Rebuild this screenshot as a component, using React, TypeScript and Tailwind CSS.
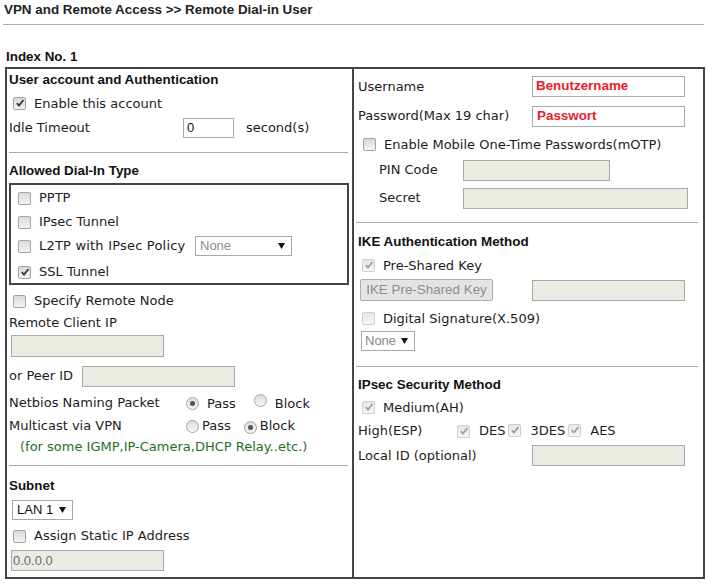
import React from "react";

const V = "font-['DejaVu_Sans',Verdana,sans-serif] text-[13px] text-[#1f1a22]";
const A = "font-['Liberation_Sans',Arial,sans-serif]";
const H = "font-['Liberation_Sans',Arial,sans-serif] text-[13.4px] font-bold text-[#111]";

function Cb({ checked, disabled }: { checked?: boolean; disabled?: boolean }) {
  return (
    <span
      className={
        disabled
          ? "inline-flex w-[13px] h-[13px] shrink-0 items-center justify-center rounded-[2px] border border-[#cfcfcf] bg-gradient-to-b from-[#e6e6e6] to-[#f7f7f7]"
          : "inline-flex w-[13px] h-[13px] shrink-0 items-center justify-center rounded-[2px] border border-[#a3a3a3] bg-gradient-to-b from-[#d9d9d9] to-[#f4f4f4]"
      }
    >
      {checked && (
        <svg width="10" height="10" viewBox="0 0 10 10">
          <path
            d="M1.8 5.2 L4 7.6 L8.4 2"
            fill="none"
            stroke={disabled ? "#a0a0a0" : "#3a3a3a"}
            strokeWidth="1.8"
          />
        </svg>
      )}
    </span>
  );
}

function Radio({ checked }: { checked?: boolean }) {
  return (
    <span className="inline-flex w-[13px] h-[13px] shrink-0 items-center justify-center rounded-full border border-[#a3a3a3] bg-gradient-to-b from-[#dcdcdc] to-[#f6f6f6]">
      {checked && <span className="w-[5px] h-[5px] rounded-full bg-[#555]" />}
    </span>
  );
}

function Tri() {
  return (
    <svg width="7" height="6" viewBox="0 0 7 6" className="shrink-0">
      <path d="M0 0 H7 L3.5 6 Z" fill="#111" />
    </svg>
  );
}

function Hr({ cls }: { cls: string }) {
  return <div className={"h-px shrink-0 bg-[#a8a8a8] " + cls} />;
}

export default function App() {
  return (
    <div className={"w-[708px] h-[584px] bg-white overflow-hidden " + V}>
      {/* Title */}
      <div className={H + " h-[24px] pl-[4px] pt-[2px] leading-[16px] text-[#222]"}>
        VPN and Remote Access &gt;&gt; Remote Dial-in User
      </div>
      <Hr cls="ml-[3px] w-[701px]" />
      <div className={H + " mt-[24px] pl-[6px] leading-[16px]"}>Index No. 1</div>

      {/* Main box */}
      <div className="mt-[2px] ml-[5px] w-[700px] h-[512px] border-2 border-[#444] flex">
        {/* Left column */}
        <div className="w-[345px] pl-[2px] flex flex-col">
          <div className={H + " mt-[1px] h-[20px] flex items-center"}>User account and Authentication</div>
          <div className="h-[26px] flex items-center pl-[4px] gap-[8px]">
            <Cb checked />
            <span className="mt-[1px]">Enable this account</span>
          </div>
          <div className="h-[24px] flex items-center">
            <span className="w-[174px]">Idle Timeout</span>
            <div className={A + " w-[51px] h-[20px] border border-[#a9a9a9] bg-white flex items-center pl-[3px] text-[13px] text-[#111]"}>0</div>
            <span className="ml-[12px]">second(s)</span>
          </div>
          <Hr cls="mt-[12px] w-[339px]" />
          <div className={H + " mt-[8px] h-[20px] flex items-center"}>Allowed Dial-In Type</div>
          <div className="mt-[2px] w-[340px] h-[102px] shrink-0 border-2 border-[#444] flex flex-col pl-[7px] pt-[1px]">
            <div className="h-[24px] shrink-0 flex items-center gap-[8px]">
              <Cb />
              <span>PPTP</span>
            </div>
            <div className="h-[24px] shrink-0 flex items-center gap-[8px]">
              <Cb />
              <span>IPsec Tunnel</span>
            </div>
            <div className="h-[24px] shrink-0 flex items-center gap-[8px]">
              <Cb />
              <span className="w-[148px] shrink-0 whitespace-nowrap tracking-[0.2px]">L2TP with IPsec Policy</span>
              <div className={A + " w-[97px] h-[20px] border border-[#a9a9a9] bg-white flex items-center justify-between pl-[4px] pr-[6px] text-[13px] text-[#8a8a8a]"}>
                None
                <Tri />
              </div>
            </div>
            <div className="mt-[3px] h-[22px] shrink-0 flex items-center gap-[8px]">
              <Cb checked />
              <span>SSL Tunnel</span>
            </div>
          </div>
          <div className="mt-[4px] h-[24px] flex items-center pl-[4px] gap-[8px]">
            <Cb />
            <span>Specify Remote Node</span>
          </div>
          <div className="h-[19px] flex items-center">Remote Client IP</div>
          <div className="mt-[3px] ml-[2px] w-[153px] h-[22px] border border-[#a9a9a9] bg-[#ebebe4]" />
          <div className="mt-[8px] h-[22px] flex items-center">
            <span className="w-[73px]">or Peer ID</span>
            <div className="w-[153px] h-[21px] border border-[#a9a9a9] bg-[#ebebe4]" />
          </div>
          <div className="mt-[5px] h-[22px] flex items-center">
            <span className="w-[177px]">Netbios Naming Packet</span>
            <Radio checked />
            <span className="ml-[8px] mt-[2px]">Pass</span>
            <span className="ml-[18px]"><Radio /></span>
            <span className="ml-[8px] mt-[2px]">Block</span>
          </div>
          <div className="mt-[1px] h-[22px] flex items-center">
            <span className="w-[177px]">Multicast via VPN</span>
            <Radio />
            <span className="ml-[3px]">Pass</span>
            <span className="ml-[13px]"><Radio checked /></span>
            <span className="ml-[3px]">Block</span>
          </div>
          <div className="h-[20px] flex items-center pl-[11px] text-[#1f6f1f]">
            (for some IGMP,IP-Camera,DHCP Relay..etc.)
          </div>
          <Hr cls="mt-[8px] w-[339px]" />
          <div className={H + " mt-[10px] h-[20px] flex items-center"}>Subnet</div>
          <div className={A + " mt-[4px] ml-[3px] w-[61px] h-[20px] border border-[#a9a9a9] bg-white flex items-center justify-between pl-[4px] pr-[6px] text-[13px] text-[#111]"}>
            LAN 1
            <Tri />
          </div>
          <div className="mt-[4px] h-[24px] flex items-center pl-[4px] gap-[8px]">
            <Cb />
            <span>Assign Static IP Address</span>
          </div>
          <div className={A + " mt-[2px] ml-[2px] w-[153px] h-[21px] border border-[#a9a9a9] bg-[#ebebe4] flex items-center pl-[1px] text-[13px] text-[#6d6d6d]"}>
            0.0.0.0
          </div>
        </div>

        {/* Divider */}
        <div className="w-[2px] bg-[#444]" />

        {/* Right column */}
        <div className="flex-1 pl-[4px] flex flex-col">
          <div className="mt-[5px] h-[24px] flex items-center">
            <span className="w-[174px] mt-[1px]">Username</span>
            <div className={A + " w-[153px] h-[21px] border border-[#a9a9a9] bg-white flex items-center pl-[3px] text-[13.4px] font-bold text-[#e8202a]"}>
              Benutzername
            </div>
          </div>
          <div className="mt-[6px] h-[24px] flex items-center">
            <span className="w-[174px]">Password(Max 19 char)</span>
            <div className={A + " w-[153px] h-[21px] border border-[#a9a9a9] bg-white flex items-center pl-[4px] text-[13.4px] font-bold text-[#e8202a]"}>
              Passwort
            </div>
          </div>
          <div className="mt-[4px] h-[24px] flex items-center pl-[5px] gap-[8px]">
            <Cb />
            <span className="mt-[1px]">Enable Mobile One-Time Passwords(mOTP)</span>
          </div>
          <div className="mt-[2px] h-[24px] flex items-center pl-[21px]">
            <span className="w-[84px]">PIN Code</span>
            <div className="w-[147px] h-[21px] border border-[#a9a9a9] bg-[#ebebe4]" />
          </div>
          <div className="mt-[4px] h-[24px] flex items-center pl-[21px]">
            <span className="w-[84px]">Secret</span>
            <div className="w-[225px] h-[21px] border border-[#a9a9a9] bg-[#ebebe4]" />
          </div>
          <Hr cls="mt-[12px] -ml-[2px] w-[342px]" />
          <div className={H + " mt-[9px] h-[20px] flex items-center"}>IKE Authentication Method</div>
          <div className="mt-[1px] h-[24px] flex items-center pl-[4px] gap-[8px]">
            <Cb checked disabled />
            <span className="mt-[1px]">Pre-Shared Key</span>
          </div>
          <div className="mt-[2px] h-[22px] flex items-center">
            <div className={A + " ml-[2px] w-[133px] h-[22px] border border-[#adadad] bg-[#e4e4e4] rounded-[2px] flex items-center justify-center text-[13.4px] text-[#8d8d8d]"}>
              IKE Pre-Shared Key
            </div>
            <div className="ml-[39px] w-[153px] h-[21px] border border-[#a9a9a9] bg-[#ebebe4]" />
          </div>
          <div className="mt-[5px] h-[24px] flex items-center pl-[4px] gap-[8px]">
            <Cb disabled />
            <span className="mt-[1px]">Digital Signature(X.509)</span>
          </div>
          <div className={A + " mt-[1px] ml-[3px] w-[54px] h-[20px] border border-[#a9a9a9] bg-white flex items-center justify-between pl-[3px] pr-[6px] text-[13px] text-[#8a8a8a]"}>
            None
            <Tri />
          </div>
          <Hr cls="mt-[15px] -ml-[2px] w-[342px]" />
          <div className={H + " mt-[8px] h-[20px] flex items-center"}>IPsec Security Method</div>
          <div className="h-[24px] flex items-center pl-[4px] gap-[8px]">
            <Cb checked disabled />
            <span className="mt-[1px]">Medium(AH)</span>
          </div>
          <div className="h-[24px] flex items-center">
            <span className="w-[99px]">High(ESP)</span>
            <Cb checked disabled />
            <span className="ml-[9px]">DES</span>
            <span className="ml-[3px]"><Cb checked disabled /></span>
            <span className="ml-[9px]">3DES</span>
            <span className="ml-[3px]"><Cb checked disabled /></span>
            <span className="ml-[9px]">AES</span>
          </div>
          <div className="mt-[1px] h-[22px] flex items-center">
            <span className="w-[174px] mt-[1px]">Local ID (optional)</span>
            <div className="w-[153px] h-[21px] border border-[#a9a9a9] bg-[#ebebe4]" />
          </div>
        </div>
      </div>
    </div>
  );
}
